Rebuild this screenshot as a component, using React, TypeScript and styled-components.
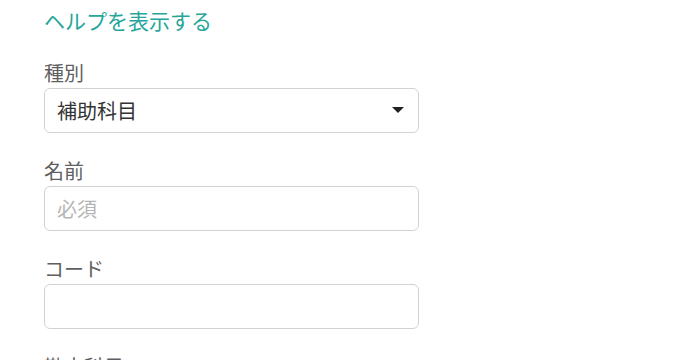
import React from "react";
import styled, { createGlobalStyle } from "styled-components";

const Global = createGlobalStyle`
  html, body { margin: 0; padding: 0; background: #fff; }
  body { font-family: "Noto Sans CJK JP", "Noto Sans", sans-serif; }
  * { box-sizing: border-box; }
`;

const Page = styled.div`
  padding: 5px 0 0 44px;
  width: 419px;
  display: flex;
  flex-direction: column;
`;

const HelpLink = styled.a`
  display: block;
  font-size: 21px;
  line-height: 30px;
  color: #26a69a;
  text-decoration: none;
  margin-bottom: 24px;
  cursor: pointer;
`;

const Group = styled.div`
  display: flex;
  flex-direction: column;
  margin-bottom: 24px;
`;

const Label = styled.label`
  font-size: 20px;
  line-height: 28px;
  color: #5f5f5f;
  margin-bottom: 1px;
`;

const Field = styled.div`
  position: relative;
  height: 45px;
  border: 1px solid #cfd3d8;
  border-radius: 6px;
  background: #fff;
  display: flex;
  align-items: center;
  padding: 0 12px;
  font-size: 20px;
  color: #333;
`;

const Placeholder = styled.span`
  color: #b5b5b5;
`;

const Caret = styled.span`
  position: absolute;
  right: 14px;
  top: 18px;
  width: 0;
  height: 0;
  border-left: 6px solid transparent;
  border-right: 6px solid transparent;
  border-top: 6px solid #222;
`;

export default function App() {
  return (
    <>
      <Global />
      <Page>
        <HelpLink>ヘルプを表示する</HelpLink>
        <Group>
          <Label>種別</Label>
          <Field>
            補助科目
            <Caret />
          </Field>
        </Group>
        <Group>
          <Label>名前</Label>
          <Field>
            <Placeholder>必須</Placeholder>
          </Field>
        </Group>
        <Group>
          <Label>コード</Label>
          <Field />
        </Group>
        <Group>
          <Label>勘定科目</Label>
          <Field />
        </Group>
      </Page>
    </>
  );
}
